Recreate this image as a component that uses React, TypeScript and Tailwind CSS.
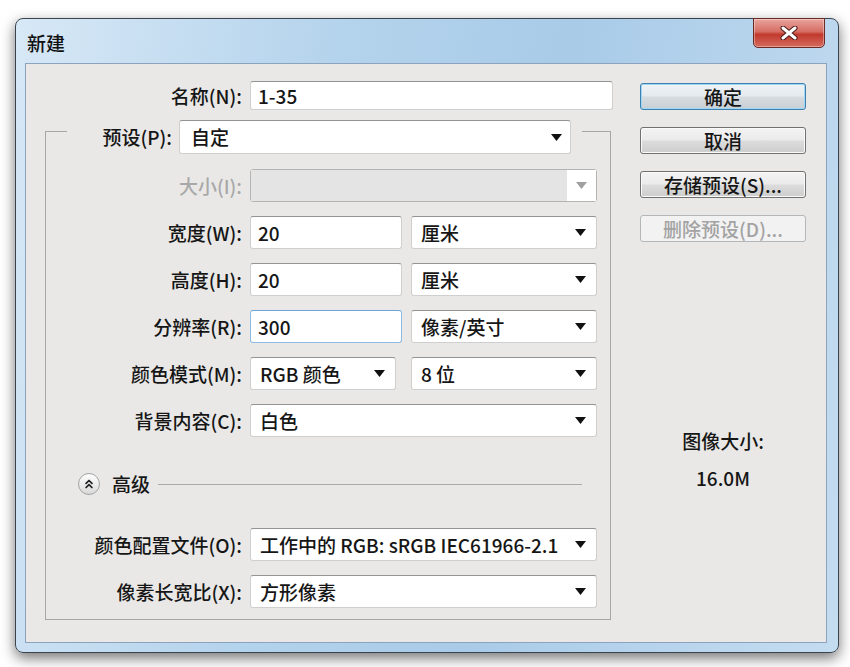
import React from "react";
import { ChevronsUp } from "lucide-react";

const Caret = ({ disabled }: { disabled?: boolean }) => (
  <svg width="11" height="7" viewBox="0 0 11 7" className="shrink-0">
    <path d="M0 0h11L5.5 7z" fill={disabled ? "#a0a0a0" : "#111"} />
  </svg>
);

const box =
  "flex items-center rounded-[3px] border border-[#cfcfcf] border-t-[#939393] bg-white";

const Select = ({ value, className }: { value: string; className: string }) => (
  <div className={`${box} h-[33px] justify-between pl-[9px] pr-[10px] ${className}`}>
    <span>{value}</span>
    <Caret />
  </div>
);

const Field = ({ value, focus }: { value: string; focus?: boolean }) => (
  <div
    className={`flex h-[33px] w-[152px] items-center rounded-[3px] border bg-white pl-[7px] ${
      focus ? "border-[#8ebbe4] border-t-[#6ea5d6]" : "border-[#cfcfcf] border-t-[#939393]"
    }`}
  >
    {value}
  </div>
);

const Row = ({
  label,
  disabled,
  children,
}: {
  label: string;
  disabled?: boolean;
  children: React.ReactNode;
}) => (
  <div className="flex items-center">
    <span
      className={`w-[196px] text-right ${disabled ? "text-[#a8a8a8]" : ""}`}
    >
      {label}
    </span>
    <div className="ml-[8px] flex">{children}</div>
  </div>
);

const Btn = ({
  children,
  kind = "normal",
}: {
  children: React.ReactNode;
  kind?: "normal" | "default" | "disabled";
}) => {
  const styles = {
    normal:
      "border-[#707070] bg-[linear-gradient(#f3f3f3_0%,#ebebeb_48%,#dcdcdc_52%,#cdcdcd_100%)] shadow-[inset_0_0_0_1px_#fbfbfb]",
    default:
      "border-[#3c7fb1] bg-[linear-gradient(#eef3f6_0%,#e5eaee_48%,#d6dce0_52%,#c9d0d5_100%)] shadow-[inset_0_0_0_1px_#9fd7f2]",
    disabled: "border-[#b3b7ba] bg-[#f2f2f2] text-[#a3a3a3]",
  };
  return (
    <div
      className={`flex h-[27px] w-[166px] items-center justify-center rounded-[3px] border ${styles[kind]}`}
    >
      {children}
    </div>
  );
};

export default function App() {
  return (
    <div className="h-[667px] w-[850px] overflow-hidden bg-white pt-[18px] font-['Noto_Sans_CJK_SC',sans-serif] text-[19px] font-medium leading-[22px] text-[#161616]">
      <div className="ml-[15px] flex h-[635px] w-[824px] flex-col rounded-[8px] border border-[#3a434e] bg-[linear-gradient(100deg,#d7e8f6_0%,#b4d3ec_35%,#a9cbe8_60%,#c4dcf0_100%)] shadow-[0_5px_14px_rgba(0,0,0,0.55)]">
        {/* title bar */}
        <div className="flex h-[44px] justify-between">
          <span className="pl-[11px] pt-[13px] text-[#111]">新建</span>
          <div className="mr-[13px] -mt-px flex h-[30px] w-[72px] items-center justify-center rounded-b-[5px] border border-[#6b2a24] bg-[linear-gradient(#e9a59e_0%,#d66d63_45%,#c2392d_55%,#d46a5e_100%)] shadow-[inset_0_0_0_1px_rgba(255,255,255,0.35)]">
            <svg width="18" height="14" viewBox="0 0 18 14">
              <path d="M3 2l12 10M15 2L3 12" stroke="#4a1a16" strokeWidth="5" strokeLinecap="round" />
              <path d="M3 2l12 10M15 2L3 12" stroke="#fff" strokeWidth="3" strokeLinecap="round" />
            </svg>
          </div>
        </div>

        {/* client area */}
        <div className="mb-[9px] ml-[9px] mr-[11px] flex flex-1 border border-[#8ba3bd] bg-[#e9e8e6]">
          {/* left form */}
          <div className="flex w-[587px] flex-col pt-[17px]">
            <div className="flex items-center">
              <span className="w-[216px] text-right">名称(N):</span>
              <div className={`${box} ml-[8px] h-[29px] w-[363px] pl-[7px]`}>1-35</div>
            </div>

            <div className="ml-[19px] mt-[10px] w-[566px]">
              <div className="flex h-[34px]">
                <div className="mt-[11px] w-[22px] border-l border-t border-[#a6a6a6]" />
                <span className="flex w-[105px] items-center justify-end">预设(P):</span>
                <div className={`${box} ml-[7px] h-[34px] w-[392px] justify-between pl-[11px] pr-[8px]`}>
                  <span>自定</span>
                  <Caret />
                </div>
                <div className="ml-[11px] mt-[11px] flex-1 border-r border-t border-[#a6a6a6]" />
              </div>

              <div className="flex flex-col border-b border-l border-r border-[#a6a6a6] pb-[11px] pt-[15px]">
                <div className="flex flex-col gap-[14px]">
                  <Row label="大小(I):" disabled>
                    <div className="flex h-[33px] w-[347px] rounded-[3px] border border-[#b4b4b4]">
                      <div className="flex-1 bg-[#e4e4e4]" />
                      <div className="flex w-[29px] items-center justify-center bg-white">
                        <Caret disabled />
                      </div>
                    </div>
                  </Row>
                  <Row label="宽度(W):">
                    <Field value="20" />
                    <Select value="厘米" className="ml-[9px] w-[186px]" />
                  </Row>
                  <Row label="高度(H):">
                    <Field value="20" />
                    <Select value="厘米" className="ml-[9px] w-[186px]" />
                  </Row>
                  <Row label="分辨率(R):">
                    <Field value="300" focus />
                    <Select value="像素/英寸" className="ml-[9px] w-[186px]" />
                  </Row>
                  <Row label="颜色模式(M):">
                    <Select value="RGB 颜色" className="w-[146px]" />
                    <Select value="8 位" className="ml-[15px] w-[186px]" />
                  </Row>
                  <Row label="背景内容(C):">
                    <Select value="白色" className="w-[347px]" />
                  </Row>
                </div>

                <div className="ml-[32px] mr-[28px] mt-[36px] flex h-[22px] items-center">
                  <div className="flex h-[22px] w-[22px] items-center justify-center rounded-full border border-[#a3a3a3] bg-[linear-gradient(#ffffff,#d9d9d9)]">
                    <ChevronsUp size={14} strokeWidth={3} color="#222" />
                  </div>
                  <span className="ml-[12px]">高级</span>
                  <div className="ml-[8px] h-px flex-1 bg-[#a9a9a9]" />
                </div>

                <div className="mt-[33px] flex flex-col gap-[14px]">
                  <Row label="颜色配置文件(O):">
                    <Select value="工作中的 RGB: sRGB IEC61966-2.1" className="w-[347px]" />
                  </Row>
                  <Row label="像素长宽比(X):">
                    <Select value="方形像素" className="w-[347px]" />
                  </Row>
                </div>
              </div>
            </div>
          </div>

          {/* right column */}
          <div className="ml-[27px] flex w-[166px] flex-col pt-[19px]">
            <div className="flex flex-col gap-[17px]">
              <Btn kind="default">确定</Btn>
              <Btn>取消</Btn>
              <Btn>存储预设(S)...</Btn>
              <Btn kind="disabled">删除预设(D)...</Btn>
            </div>
            <div className="mt-[187px] text-center leading-[24px]">图像大小:</div>
            <div className="mt-[13px] text-center leading-[24px]">16.0M</div>
          </div>
        </div>
      </div>
    </div>
  );
}
